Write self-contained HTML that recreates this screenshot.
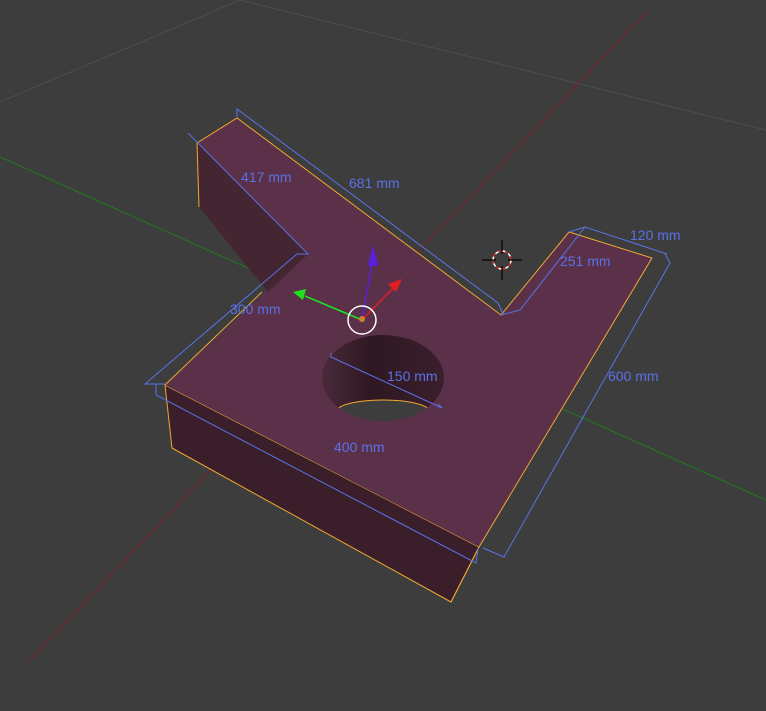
<!DOCTYPE html>
<html><head><style>
html,body{margin:0;padding:0;background:#3d3d3d;}
svg{display:block}
text{font-family:"Liberation Sans","DejaVu Sans",sans-serif;font-size:14px;fill:#5a72e6}
</style></head><body>
<svg width="766" height="711" viewBox="0 0 766 711" xmlns="http://www.w3.org/2000/svg">
<rect width="766" height="711" fill="#3d3d3d"/>
<line x1="0" y1="102" x2="240" y2="0" stroke="#4e4e4e" stroke-width="1"/>
<line x1="240" y1="0" x2="766" y2="130" stroke="#4e4e4e" stroke-width="1"/>
<line x1="0" y1="157" x2="766" y2="500" stroke="#1f7a1f" stroke-width="1"/>
<line x1="648" y1="10" x2="30" y2="660" stroke="#7a1f24" stroke-width="1"/>
<polygon points="165,385 479,547 451,602 172,448" fill="#3a1f2a" stroke="#f0a830" stroke-width="1"/>
<polygon points="197,143 237,118 501,315 569,232 652,258 479,547 165,385 268,290 308,254" fill="#5b3049"/>
<polygon points="197,143 308,254 268,292 199,207" fill="#442532"/>
<polyline points="199,207 197,143 237,118 501,315 569,232 652,258 479,547" fill="none" stroke="#f0a830" stroke-width="1"/>
<polyline points="165,385 262,292" fill="none" stroke="#f0a830" stroke-width="1"/>
<line x1="479" y1="547" x2="451" y2="602" stroke="#f0a830"/>
<defs><clipPath id="h"><ellipse cx="383" cy="378" rx="61" ry="43"/></clipPath>
<linearGradient id="g" x1="0" x2="1"><stop offset="0" stop-color="#4a2a3a"/><stop offset="0.4" stop-color="#2e1822"/><stop offset="1" stop-color="#3a1f2c"/></linearGradient></defs>
<ellipse cx="383" cy="378" rx="61" ry="43" fill="url(#g)"/>
<ellipse cx="383" cy="411" rx="46" ry="11" fill="#3d3d3d" stroke="#f0a830" clip-path="url(#h)"/>
<g fill="none" stroke="#5a72e6" stroke-width="1">
<polyline points="237,118 237,109 498,303 503,314"/>
<polyline points="188,133 308,254 297,254 145,384 165,384"/>
<polyline points="156,384 156,395 476,563 478,548"/>
<polyline points="483,548 504,557 670,263 665,254"/>
<polyline points="569,232 585,227 667,254"/>
<polyline points="585,227 520,310 501,315"/>
<polyline points="331,353 331,357 442,408 438,404"/>
</g>
<text x="241" y="182">417 mm</text>
<text x="349" y="188">681 mm</text>
<text x="230" y="314">300 mm</text>
<text x="387" y="381">150 mm</text>
<text x="334" y="452">400 mm</text>
<text x="560" y="266">251 mm</text>
<text x="630" y="240">120 mm</text>
<text x="608" y="381">600 mm</text>
<line x1="362" y1="320" x2="373" y2="258" stroke="#5a20e0" stroke-width="1.5"/>
<polygon points="373,245 368,266 378,266" fill="#5a20e0"/>
<line x1="362" y1="320" x2="395" y2="286" stroke="#e02020" stroke-width="1.5"/>
<polygon points="402,279 388,284 396,292" fill="#e02020"/>
<line x1="362" y1="320" x2="305" y2="296" stroke="#20e020" stroke-width="1.5"/>
<polygon points="293,292 306,289 303,300" fill="#20e020"/>
<circle cx="362" cy="320" r="14" fill="none" stroke="#fff" stroke-width="1.5"/>
<circle cx="362" cy="319" r="3" fill="#d08030"/>
<circle cx="502" cy="260" r="9" fill="none" stroke="#fff" stroke-width="1.5" stroke-dasharray="4 3"/>
<circle cx="502" cy="260" r="9" fill="none" stroke="#e02020" stroke-width="1.5" stroke-dasharray="3 4" stroke-dashoffset="3.5"/>
<g stroke="#000" stroke-width="1.2"><line x1="482" y1="260" x2="496" y2="260"/><line x1="508" y1="260" x2="522" y2="260"/><line x1="502" y1="240" x2="502" y2="254"/><line x1="502" y1="266" x2="502" y2="280"/></g>
</svg>
</body></html>
